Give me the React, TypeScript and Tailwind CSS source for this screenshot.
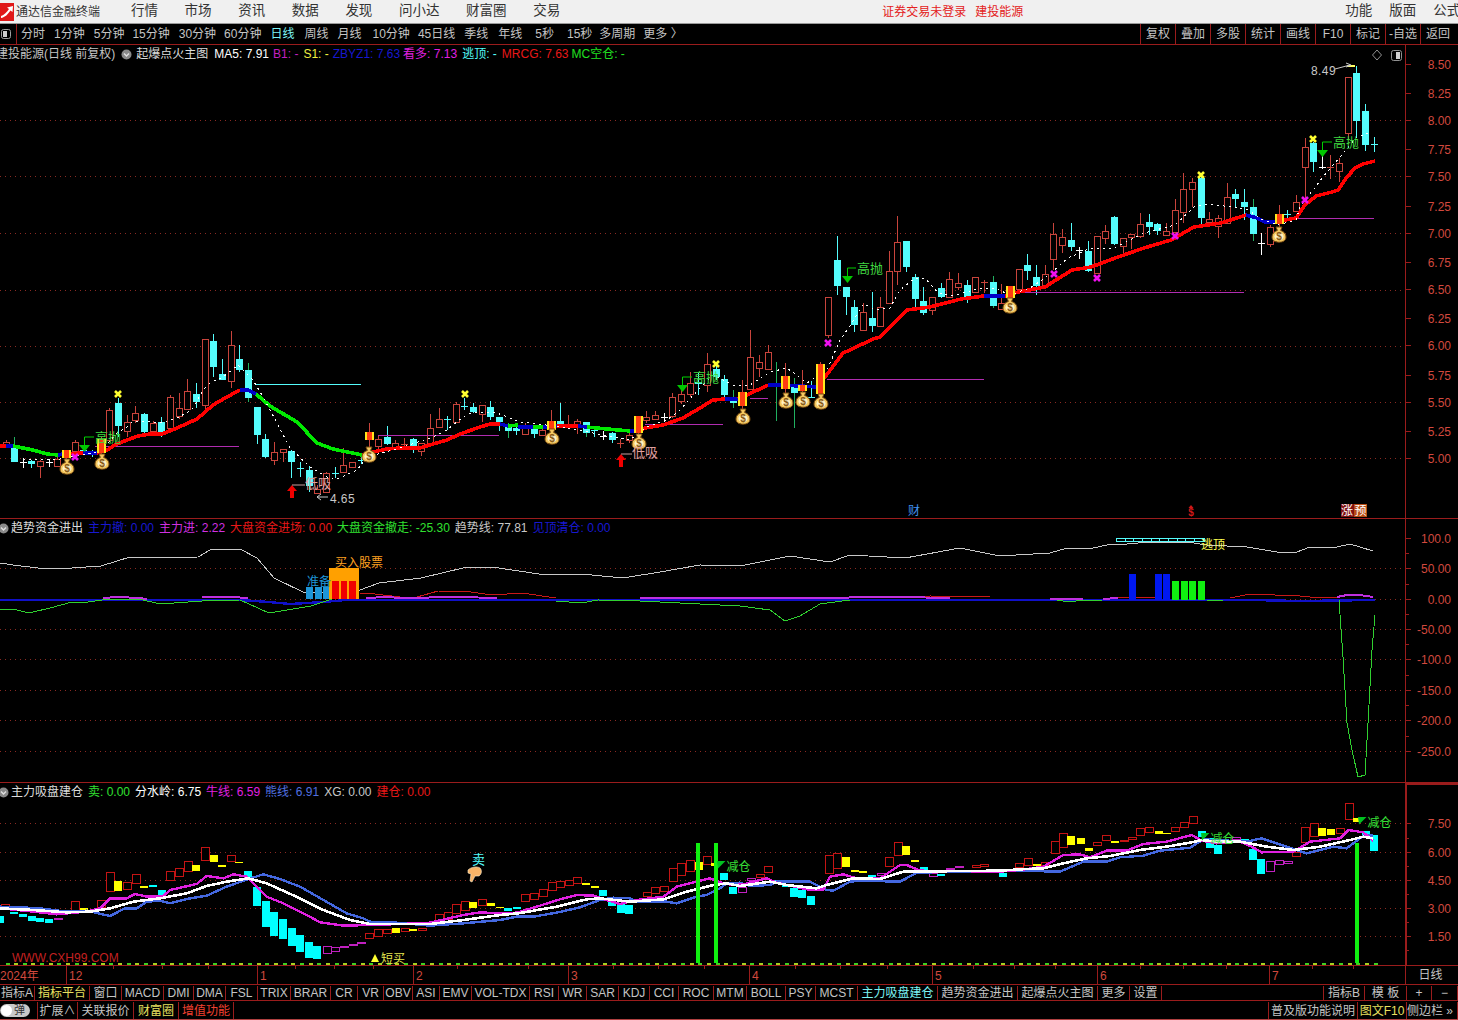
import React from 'react'

type Kind = 'r' | 'c' | 'g' | 'w' | 'd' | 'e' | 's'
type Row = [number, number, number, number, Kind]
type Pt = [number, number]

const BORDER = '#9a1c1c'
const GRID = '#8a2a22'
const AXIS_TEXT = '#d2493e'

// x of candle i, all the panels share it
const cx = (i: number) => 5.5 + 8.66 * i

// rows are read off 3x crops, so y = base + v / 3
const seg = (start: number, base: number, rows: Row[]) =>
  rows.map((r, k) => ({
    x: cx(start + k),
    top: base + r[0] / 3,
    bot: base + r[1] / 3,
    hi: base + r[2] / 3,
    lo: base + r[3] / 3,
    kind: r[4],
  }))

const candles = [
  ...seg(0, 330, [
    [335, 345, 330, 350, 'r'], [355, 395, 322, 395, 'g'], [395, 395, 385, 413, 'w'], [393, 402, 390, 413, 'c'],
    [393, 407, 390, 443, 'r'], [397, 397, 388, 410, 'w'], [387, 407, 382, 407, 'r'], [361, 384, 361, 390, 's'],
    [335, 362, 330, 362, 'r'], [360, 375, 345, 375, 'c'], [370, 370, 360, 380, 'd'], [327, 370, 320, 375, 's'],
    [240, 330, 235, 335, 'r'], [218, 288, 205, 320, 'c'], [275, 302, 255, 320, 'r'], [250, 270, 228, 280, 'r'],
    [252, 306, 250, 308, 'c'], [280, 305, 272, 308, 'r'], [275, 307, 262, 322, 'c'], [202, 295, 195, 298, 'r'],
    [235, 260, 190, 268, 'r'], [182, 235, 148, 240, 'r'], [192, 217, 160, 235, 'c'], [28, 225, 28, 238, 'r'],
    [33, 110, 12, 142, 'c'], [132, 150, 88, 150, 'c'], [46, 155, 3, 175, 'r'], [88, 120, 45, 125, 'c'],
    [120, 203, 98, 215, 'g'], [230, 315, 230, 342, 'c'], [327, 381, 312, 385, 'c'], [367, 392, 335, 405, 'r'],
    [358, 367, 358, 395, 'r'], [363, 395, 360, 443, 'c'], [415, 415, 395, 440, 'd'], [420, 467, 408, 485, 'c'],
    [478, 490, 465, 492, 'r'], [430, 488, 425, 490, 'r'], [430, 430, 412, 445, 'd'], [405, 425, 355, 425, 'r'],
    [397, 412, 395, 415, 'r'], [390, 390, 378, 402, 'd'], [306, 330, 280, 355, 's'], [328, 350, 318, 360, 'r'],
    [322, 343, 288, 345, 'c'], [340, 352, 330, 360, 'r'],
  ]),
  ...seg(46, 330, [
    [342, 342, 325, 350, 'e'], [328, 350, 325, 368, 'c'], [338, 362, 338, 378, 'r'], [295, 340, 252, 345, 'r'],
    [267, 290, 235, 295, 'r'], [267, 267, 258, 300, 'd'], [222, 275, 215, 278, 'r'], [228, 228, 205, 240, 'd'],
    [232, 247, 218, 250, 'c'], [226, 254, 226, 275, 'r'], [232, 260, 213, 270, 'c'], [262, 276, 262, 303, 'c'],
    [285, 302, 280, 323, 'g'], [294, 302, 285, 315, 'c'], [295, 314, 280, 314, 'r'], [298, 313, 290, 323, 'c'],
    [300, 314, 290, 314, 'r'], [273, 300, 240, 315, 's'], [272, 285, 220, 290, 'c'], [286, 286, 255, 295, 'e'],
    [272, 285, 268, 312, 'r'], [277, 308, 277, 320, 'g'], [300, 300, 290, 320, 'd'], [318, 318, 303, 330, 'w'],
    [310, 330, 305, 338, 'c'], [340, 340, 328, 355, 'e'], [315, 331, 305, 340, 'r'], [258, 308, 258, 320, 's'],
    [260, 270, 243, 280, 'r'], [255, 268, 243, 270, 'r'], [262, 262, 250, 275, 'w'], [202, 260, 190, 265, 'r'],
    [193, 215, 180, 222, 'r'], [160, 192, 125, 200, 'r'], [155, 163, 130, 195, 'c'], [103, 165, 70, 185, 'r'],
    [118, 140, 95, 150, 'c'], [148, 195, 135, 200, 'c'], [208, 220, 180, 233, 'g'], [187, 228, 150, 240, 's'],
    [82, 178, 0, 180, 'r'], [95, 112, 75, 140, 'r'], [67, 118, 45, 120, 'r'], [175, 175, 97, 272, 'g'],
    [138, 177, 100, 190, 's'], [167, 188, 145, 293, 'g'], [165, 183, 120, 190, 's'], [200, 200, 153, 205, 'd'],
    [102, 192, 97, 195, 's'],
  ]),
  ...seg(95, 200, [
    [292, 405, 292, 415, 'r'], [180, 258, 108, 285, 'c'], [262, 290, 262, 345, 'c'], [322, 375, 300, 395, 'c'],
    [337, 392, 310, 392, 'r'], [355, 378, 277, 395, 'c'], [320, 377, 290, 380, 'r'], [214, 311, 153, 312, 'r'],
    [127, 214, 48, 255, 'r'], [124, 201, 124, 215, 'c'], [230, 298, 222, 320, 'c'], [304, 338, 262, 345, 'c'],
    [290, 330, 290, 345, 'r'], [265, 290, 250, 295, 'c'], [238, 292, 215, 295, 'r'], [250, 263, 218, 270, 'r'],
    [256, 290, 240, 308, 'c'], [232, 278, 232, 280, 'r'], [245, 245, 240, 280, 'e'], [247, 317, 228, 325, 'g'],
    [310, 328, 252, 330, 'r'], [258, 295, 258, 300, 's'], [208, 268, 208, 270, 'r'], [195, 214, 163, 240, 'c'],
    [232, 258, 195, 285, 'c'],
  ]),
  ...seg(120, 165, [
    [328, 360, 300, 360, 'r'], [208, 284, 175, 315, 'r'], [217, 240, 192, 265, 'r'], [225, 246, 175, 258, 'c'],
    [255, 255, 245, 282, 'w'], [258, 318, 228, 320, 'c'], [213, 323, 213, 325, 'r'], [198, 218, 180, 238, 'r'],
    [155, 238, 153, 240, 'c'], [220, 245, 220, 265, 'r'], [208, 218, 208, 252, 'r'], [178, 215, 145, 218, 'r'],
    [170, 187, 148, 210, 'c'], [177, 198, 175, 210, 'c'], [198, 209, 175, 210, 'r'], [135, 200, 102, 205, 'r'],
    [72, 140, 25, 175, 'r'], [52, 73, 40, 125, 'r'], [40, 158, 30, 190, 'c'], [163, 172, 140, 185, 'r'],
    [160, 185, 150, 218, 'r'], [95, 172, 55, 173, 'r'], [87, 102, 72, 125, 'c'], [112, 126, 72, 165, 'c'],
    [127, 207, 103, 227, 'g'], [235, 235, 205, 270, 'w'], [187, 237, 180, 245, 'r'], [148, 177, 120, 190, 's'],
    [147, 147, 135, 165, 'd'], [110, 137, 90, 140, 'r'],
  ]),
  ...seg(150, 50, [
    [292, 352, 265, 445, 'r'], [278, 335, 275, 365, 'c'], [352, 352, 318, 358, 'w'], [351, 351, 315, 388, 'e'],
    [340, 365, 325, 395, 'r'], [82, 250, 82, 270, 'r'], [70, 212, 48, 260, 'c'], [183, 285, 163, 303, 'c'],
    [282, 282, 260, 305, 'd'],
  ]),
]

const mrcg: { c: string; p: Pt[] }[] = [
  { c: '#ff0000', p: [[0, 446], [6, 446]] },
  { c: '#0000c8', p: [[6, 446], [13, 446]] },
  { c: '#00e800', p: [[13, 446], [23, 448], [33, 450], [47, 454], [58, 455]] },
  { c: '#0000c8', p: [[58, 455], [63, 454]] },
  { c: '#ff0000', p: [[63, 454], [83, 453]] },
  { c: '#0000c8', p: [[83, 453], [97, 453]] },
  { c: '#ff0000', p: [[97, 453], [107, 450], [115, 445], [127, 440], [138, 436], [150, 434], [162, 434], [177, 428], [197, 419], [213, 405], [225, 398], [240, 390]] },
  { c: '#0000c8', p: [[240, 390], [248, 390], [256, 394]] },
  { c: '#00e800', p: [[256, 394], [270, 406], [297, 422], [317, 443], [333, 449], [362, 455]] },
  { c: '#ff0000', p: [[362, 455], [373, 452], [387, 449], [400, 448], [420, 448], [433, 444], [447, 440], [460, 434], [480, 427], [490, 424], [500, 424]] },
  { c: '#0000c8', p: [[500, 424], [508, 426]] },
  { c: '#00e800', p: [[508, 426], [518, 425]] },
  { c: '#0000c8', p: [[518, 427], [533, 427]] },
  { c: '#00e800', p: [[533, 427], [543, 427]] },
  { c: '#0000c8', p: [[543, 427], [557, 426]] },
  { c: '#ff0000', p: [[557, 426], [578, 426]] },
  { c: '#0000c8', p: [[578, 426], [587, 427]] },
  { c: '#00e800', p: [[587, 427], [607, 429], [630, 431]] },
  { c: '#0000c8', p: [[630, 431], [640, 431]] },
  { c: '#ff0000', p: [[640, 431], [645, 428], [663, 425], [683, 418], [700, 408], [713, 400], [725, 399]] },
  { c: '#0000c8', p: [[725, 399], [738, 399]] },
  { c: '#ff0000', p: [[738, 399], [747, 395], [768, 385]] },
  { c: '#0000c8', p: [[768, 385], [782, 385], [817, 387]] },
  { c: '#ff0000', p: [[817, 387], [825, 377], [843, 353], [850, 350], [873, 339], [880, 337], [907, 310], [930, 307], [961, 299], [984, 296]] },
  { c: '#0000c8', p: [[984, 296], [1005, 296]] },
  { c: '#ff0000', p: [[1005, 296], [1018, 292], [1045, 287], [1072, 270], [1091, 267], [1118, 257], [1144, 248], [1171, 240], [1194, 227], [1221, 223], [1246, 215]] },
  { c: '#0000c8', p: [[1246, 215], [1257, 218], [1265, 222], [1275, 222]] },
  { c: '#ff0000', p: [[1275, 222], [1285, 220], [1296, 218], [1305, 205], [1316, 196], [1332, 192], [1338, 190], [1347, 177], [1355, 168], [1363, 164], [1375, 161]] },
]

const dashed: Pt[] = [
  [23, 459], [60, 459], [76, 456], [100, 452], [117, 433], [127, 427], [133, 421], [150, 422], [163, 423], [177, 418], [192, 410], [203, 390], [210, 383],
  [223, 377], [238, 365], [253, 380], [263, 397], [277, 423], [290, 448], [310, 467], [327, 477], [337, 479], [357, 470], [367, 457],
  [400, 448], [433, 437], [447, 430], [463, 417], [473, 412], [497, 413], [520, 422], [563, 427], [613, 437], [630, 440], [647, 427], [667, 420], [680, 410],
  [698, 390], [713, 375], [733, 385], [750, 385], [770, 372], [787, 368], [807, 383], [827, 370], [840, 340], [852, 323], [863, 304], [877, 310], [890, 308],
  [900, 290], [915, 278], [926, 279], [938, 293], [953, 296], [980, 288], [995, 288], [1010, 295], [1030, 288], [1045, 278], [1068, 258], [1091, 248], [1114, 248],
  [1144, 233], [1175, 225], [1194, 207], [1209, 204], [1232, 207], [1248, 210], [1263, 220], [1278, 225], [1296, 220], [1300, 207], [1323, 177], [1340, 157], [1357, 137], [1372, 132],
]

const bagsAt: Pt[] = [[67, 468], [102, 463], [369, 456], [552, 438], [639, 443], [743, 418], [786, 402], [803, 401], [821, 403], [1010, 307], [1279, 236]]
const yellowStars: Pt[] = [[118, 394], [465, 394], [716, 364], [1313, 139], [1201, 175]]
const pinkStars: Pt[] = [[75, 457], [828, 343], [1054, 274], [1097, 278], [1175, 236], [1305, 200]]

const hLines: [number, number, number, string][] = [
  [95, 239, 446.5, '#b02cb0'], [378, 499, 435.5, '#b02cb0'], [645, 723, 424.5, '#b02cb0'], [750, 768, 398.5, '#b02cb0'],
  [827, 984, 379.5, '#b02cb0'], [1010, 1244, 292.5, '#b02cb0'], [1285, 1374, 218.5, '#b02cb0'], [256, 361, 384.5, '#54fcfc'],
]

const toPts = (p: Pt[]) => p.map((q) => q.join(',')).join(' ')
// same as above for points read off a 3x crop
const crop = (bx: number, by: number, p: Pt[]): Pt[] => p.map(([x, y]) => [bx + x / 3, by + y / 3])

function Grid({ ys }: { ys: number[] }) {
  return (
    <g shapeRendering="crispEdges">
      {ys.map((y) => (
        <line key={y} x1={0} x2={1405} y1={Math.round(y) + 0.5} y2={Math.round(y) + 0.5} stroke={GRID} strokeDasharray="1 4" />
      ))}
    </g>
  )
}

function Candle({ c }: { c: (typeof candles)[number] }) {
  const x = Math.round(c.x)
  const red = '#c8443c'
  if (c.kind === 's') {
    return (
      <g shapeRendering="crispEdges">
        <line x1={x + 0.5} x2={x + 0.5} y1={c.hi} y2={c.lo} stroke={red} />
        <rect x={x - 4} y={c.top} width={9} height={c.bot - c.top} fill="#ffe81c" />
        <rect x={x - 2} y={c.top} width={5} height={c.bot - c.top} fill="#ff3c10" />
      </g>
    )
  }
  if (c.kind === 'r') {
    return (
      <g shapeRendering="crispEdges">
        <line x1={x + 0.5} x2={x + 0.5} y1={c.hi} y2={c.lo} stroke={red} />
        <rect x={x - 2.5} y={Math.round(c.top) + 0.5} width={6} height={Math.max(2, c.bot - c.top)} fill="#000" stroke={red} />
      </g>
    )
  }
  if (c.kind === 'c' || c.kind === 'g') {
    return (
      <g shapeRendering="crispEdges">
        <line x1={x + 0.5} x2={x + 0.5} y1={c.hi} y2={c.lo} stroke={c.kind === 'g' ? '#20b060' : '#54fcfc'} />
        <rect x={x - 3} y={c.top} width={7} height={c.bot - c.top} fill="#54fcfc" />
      </g>
    )
  }
  const col = c.kind === 'w' ? '#ffffff' : c.kind === 'e' ? red : '#54fcfc'
  return (
    <g shapeRendering="crispEdges" stroke={col}>
      <line x1={x + 0.5} x2={x + 0.5} y1={c.hi} y2={c.lo} />
      <line x1={x - 3} x2={x + 4} y1={c.top + 0.5} y2={c.top + 0.5} />
    </g>
  )
}

function Bag({ x, y }: { x: number; y: number }) {
  return (
    <g transform={`translate(${x} ${y})`}>
      <path d="M-3 -9 h6 l-1.4 3.4 c3.6 1.2 5.4 3.6 5.4 6.6 c0 3.6 -3 5.2 -7 5.2 s-7 -1.6 -7 -5.2 c0 -3 1.8 -5.4 5.4 -6.6z" fill="#f4c860" stroke="#7a4c10" />
      <ellipse cx={0} cy={0.5} rx={4.6} ry={3.8} fill="#fff2c4" />
      <text x={0} y={3.8} fontSize={10} fontWeight={700} textAnchor="middle" fill="#8a5a14">$</text>
    </g>
  )
}

function Star({ x, y, c }: { x: number; y: number; c: string }) {
  return <path d={`M${x - 3} ${y - 3} L${x + 3} ${y + 3} M${x + 3} ${y - 3} L${x - 3} ${y + 3}`} stroke={c} strokeWidth={2.6} />
}

function SellTag({ x, y, tx }: { x: number; y: number; tx: number }) {
  return (
    <g>
      <path d={`M${tx - 1} ${y - 8} H${x + 0.5} V${y}`} fill="none" stroke="#00d000" />
      <path d={`M${x - 5} ${y} H${x + 6} L${x + 0.5} ${y + 7}z`} fill="#00c800" />
      <text x={tx} y={y - 3.5} fontSize={13} fill="#40d840">高抛</text>
    </g>
  )
}

function BuyTag({ x, y, tx }: { x: number; y: number; tx: number }) {
  return (
    <g>
      <path d={`M${x - 5} ${y} L${x} ${y - 6} L${x + 5} ${y} H${x + 2} V${y + 7} H${x - 2} V${y}z`} fill="#f00000" />
      <path d={`M${x} ${y - 6} H${tx}`} stroke="#c8a0a0" />
      <text x={tx} y={y - 3} fontSize={13} fill="#e0a0a0">低吸</text>
    </g>
  )
}

function MainChart() {
  return (
    <svg width={1405} height={473} viewBox="0 45 1405 473" className="block shrink-0">
      <Grid ys={[120, 176, 233, 289.5, 346, 402, 458]} />
      {candles.map((c, i) => c.kind !== 's' && <Candle key={i} c={c} />)}
      {hLines.map(([a, b, y, c]) => (
        <line key={a} x1={a} x2={b} y1={y} y2={y} stroke={c} shapeRendering="crispEdges" />
      ))}
      {mrcg.map((s, i) => (
        <polyline key={i} points={toPts(s.p)} fill="none" stroke={s.c} strokeWidth={3.6} strokeLinejoin="round" shapeRendering="crispEdges" />
      ))}
      <polyline points={toPts(dashed)} fill="none" stroke="#ffffff" strokeWidth={1} strokeDasharray="2 4" shapeRendering="crispEdges" />
      {candles.map((c, i) => c.kind === 's' && <Candle key={i} c={c} />)}
      {bagsAt.map(([x, y]) => <Bag key={x} x={x} y={y} />)}
      {yellowStars.map(([x, y]) => <Star key={x} x={x} y={y} c="#ffff30" />)}
      {pinkStars.map(([x, y]) => <Star key={x} x={x} y={y} c="#f010f0" />)}
      <SellTag x={84} y={445} tx={95} />
      <SellTag x={847} y={276} tx={857} />
      <SellTag x={682} y={385} tx={693} />
      <SellTag x={1322} y={150} tx={1333} />
      <BuyTag x={292} y={491} tx={305} />
      <BuyTag x={621} y={460} tx={632} />
      <rect x={1347} y={65} width={8} height={2} fill="#ffff60" />
      <text x={1311} y={75} fontSize={12} fill="#c8c8c8" letterSpacing={0.4}>8.49</text>
      <path d="M1335 69 L1350 65 M1346 63 L1351 65 L1346 67" stroke="#c8c8c8" fill="none" />
      <text x={330} y={503} fontSize={12} fill="#c8c8c8" letterSpacing={0.4}>4.65</text>
      <path d="M328 497 H317 M321 494 L317 497 L321 500" stroke="#c8c8c8" fill="none" />
      <path d="M1377 50 L1381.5 55 L1377 60 L1372.5 55z" fill="none" stroke="#909090" />
      <rect x={1391.5} y={50.5} width={10} height={10} rx={2} fill="none" stroke="#909090" />
      <rect x={1396} y={52} width={4} height={7} fill="#d0d0d0" />
      <text x={908} y={515} fontSize={12} fill="#4090f0">财</text>
      <path d="M1191 505 l2.5 3 h-5z" fill="#d01818" />
      <text x={1191} y={516} fontSize={10} fontWeight={700} textAnchor="middle" fill="#d01818">$</text>
      <rect x={1341} y={504} width={13} height={13} fill="#801010" />
      <rect x={1354} y={504} width={13} height={13} fill="#b84c14" />
      <text x={1341} y={515} fontSize={12} fill="#ffffff">涨</text>
      <text x={1354.5} y={515} fontSize={12} fill="#ffffff">预</text>
    </svg>
  )
}

const trend: Pt[] = [
  [0, 563], [13, 565], [38, 568], [72, 568], [101, 566], [130, 557], [156, 558], [198, 557], [210, 550], [240, 549], [257, 558], [274, 578], [305, 593],
  [360, 590], [379, 583], [421, 578], [463, 568], [492, 567], [539, 574], [581, 574], [623, 578], [660, 572], [700, 565], [740, 566], [790, 556], [830, 562],
  [850, 555], [905, 558], [960, 548], [1000, 556], [1050, 553], [1067, 548], [1093, 548], [1107, 545], [1127, 544], [1150, 542], [1187, 542], [1207, 545],
  [1247, 547], [1277, 552], [1297, 552], [1310, 547], [1337, 547], [1350, 544], [1373, 551],
]
const greenParts: Pt[][] = [
  [[0, 610], [13, 609], [29, 613], [50, 608], [72, 602], [88, 602], [109, 599], [139, 599], [160, 604], [202, 601], [240, 600], [269, 613], [311, 606], [332, 599]],
  [[556, 601], [581, 603], [598, 600], [640, 601], [680, 603], [740, 606], [770, 610], [785, 621], [800, 616], [820, 604], [850, 600]],
  [[1050, 599], [1070, 602], [1083, 600], [1102, 600]],
  [[1207, 601], [1223, 600]],
  [[1339, 600], [1343, 657], [1347, 723], [1352, 750], [1358, 777], [1365, 775], [1368, 723], [1372, 650], [1375, 615]],
]
const redParts: Pt[][] = [
  [[114, 597], [139, 597]],
  [[360, 593], [375, 594], [400, 597], [417, 597], [438, 591], [471, 592], [492, 595], [522, 593], [556, 598]],
  [[880, 598], [930, 596], [990, 597]],
  [[1118, 597], [1155, 597]],
  [[1230, 598], [1240, 596], [1250, 594], [1300, 596], [1310, 597], [1337, 597]],
]
const purpleParts: Pt[][] = [
  [[103, 598], [118, 597], [139, 598], [147, 599]],
  [[202, 597], [231, 597], [248, 598]],
  [[366, 598], [387, 597], [400, 598], [459, 597], [497, 598]],
  [[640, 598], [690, 598], [800, 598], [900, 597], [950, 598]],
  [[1050, 599], [1083, 599]],
  [[1103, 599], [1118, 598]],
  [[1337, 597], [1347, 595], [1360, 595], [1373, 597]],
]
const blueBase: Pt[] = [[0, 600], [240, 600], [269, 602], [290, 604], [324, 602], [345, 600], [1250, 600], [1300, 601], [1375, 600]]

function FundChart() {
  const ladder = Array.from({ length: 11 }, (_, k) => 1116.5 + k * 8.66)
  return (
    <svg width={1405} height={263} viewBox="0 519 1405 263" className="block shrink-0">
      <Grid ys={[568, 599, 629, 659, 690, 720, 751]} />
      <polyline points={toPts(trend)} fill="none" stroke="#c8c8c8" shapeRendering="crispEdges" />
      <polyline points={toPts(blueBase)} fill="none" stroke="#1010c8" strokeWidth={2.4} shapeRendering="crispEdges" />
      {greenParts.map((p, i) => <polyline key={i} points={toPts(p)} fill="none" stroke="#30d030" shapeRendering="crispEdges" />)}
      {redParts.map((p, i) => <polyline key={i} points={toPts(p)} fill="none" stroke="#c81818" shapeRendering="crispEdges" />)}
      {purpleParts.map((p, i) => <polyline key={i} points={toPts(p)} fill="none" stroke="#c030e0" strokeWidth={2} shapeRendering="crispEdges" />)}
      <g shapeRendering="crispEdges">
        <rect x={306} y={587} width={7} height={12} fill="#1e96d8" />
        <rect x={315} y={587} width={7} height={12} fill="#1e96d8" />
        <rect x={323} y={587} width={6} height={12} fill="#1e96d8" />
        <rect x={329} y={568} width={30} height={31} fill="#ffa000" />
        <rect x={332} y={581} width={7} height={18} fill="#f00000" />
        <rect x={341} y={581} width={6} height={18} fill="#f00000" />
        <rect x={349} y={581} width={7} height={18} fill="#f00000" />
        {[1129, 1155, 1163].map((x) => <rect key={x} x={x} y={574} width={7} height={26} fill="#0018f0" />)}
        {[1172, 1181, 1189, 1198].map((x) => <rect key={x} x={x} y={581} width={7} height={19} fill="#10f010" />)}
        <rect x={1116.5} y={538.5} width={88} height={3} fill="none" stroke="#54fcfc" />
        {ladder.map((x) => <line key={x} x1={x} x2={x} y1={538} y2={542} stroke="#54fcfc" />)}
      </g>
      <text x={307} y={586} fontSize={12} fill="#1e96d8">准备</text>
      <text x={335} y={567} fontSize={12} fill="#ffa020">买入股票</text>
      <text x={1201} y={549} fontSize={12} fill="#ffff50">逃顶</text>
    </svg>
  )
}

type Box = [number, number, number, 'r' | 'y' | 'c' | 'm']
const boxes = (bx: number, by: number, rows: Box[]) =>
  rows.map(([x, a, b, k]) => ({ x: bx + x / 3, top: by + a / 3, bot: by + b / 3, k }))

const volBoxes = [
  ...boxes(0, 780, [
    [16, 373, 385, 'r'], [0, 408, 430, 'c'], [43, 396, 401, 'c'], [70, 402, 410, 'c'], [95, 408, 422, 'c'], [121, 414, 425, 'c'], [148, 418, 428, 'c'], [174, 415, 419, 'm'],
    [226, 363, 390, 'r'], [252, 384, 389, 'y'], [278, 396, 400, 'y'], [304, 361, 382, 'r'], [330, 277, 335, 'r'], [355, 303, 333, 'y'], [381, 305, 325, 'r'], [407, 283, 310, 'r'],
    [433, 318, 323, 'y'], [460, 315, 320, 'c'], [485, 330, 345, 'c'], [511, 272, 298, 'r'], [537, 265, 290, 'r'], [563, 243, 272, 'r'], [589, 256, 272, 'y'], [616, 202, 242, 'r'],
    [641, 225, 245, 'y'], [667, 255, 260, 'y'], [694, 225, 242, 'r'], [718, 245, 250, 'y'], [745, 273, 292, 'c'], [771, 320, 377, 'c'], [797, 363, 441, 'c'], [823, 396, 468, 'c'],
    [850, 417, 476, 'c'], [875, 444, 498, 'c'], [901, 465, 515, 'c'], [928, 486, 533, 'c'], [952, 498, 536, 'c'], [980, 498, 520, 'm'], [1006, 502, 514, 'm'], [1032, 498, 502, 'm'],
    [1058, 491, 495, 'm'], [1084, 487, 491, 'm'], [1108, 460, 476, 'r'], [1135, 446, 466, 'r'], [1161, 447, 460, 'r'], [1187, 444, 458, 'y'], [1214, 445, 454, 'r'], [1240, 447, 454, 'y'],
    [1265, 445, 451, 'r'], [1318, 403, 423, 'r'], [1343, 397, 417, 'r'], [1369, 373, 400, 'r'], [1396, 363, 390, 'r'], [1420, 366, 384, 'y'], [1447, 357, 376, 'r'], [1473, 369, 377, 'y'],
  ]),
  ...boxes(500, 800, [
    [0, 322, 325, 'y'], [25, 324, 333, 'c'], [52, 321, 326, 'c'], [76, 283, 305, 'r'], [103, 280, 298, 'r'], [128, 268, 288, 'r'], [155, 247, 272, 'r'], [181, 243, 262, 'r'], [206, 241, 257, 'r'],
    [232, 232, 250, 'r'], [259, 249, 254, 'y'], [284, 258, 263, 'y'], [310, 270, 288, 'c'], [337, 295, 317, 'c'], [362, 312, 338, 'c'], [388, 315, 341, 'c'], [440, 277, 290, 'r'], [466, 262, 281, 'r'],
    [493, 259, 275, 'r'], [518, 205, 245, 'r'], [544, 190, 226, 'r'], [571, 181, 214, 'r'], [596, 186, 209, 'y'], [622, 169, 194, 'r'], [645, 189, 197, 'y'], [673, 220, 240, 'c'], [700, 262, 281, 'c'],
    [727, 262, 277, 'm'], [752, 235, 241, 'm'], [779, 223, 232, 'r'], [805, 199, 217, 'r'], [830, 240, 246, 'c'], [857, 255, 261, 'c'], [883, 265, 290, 'c'], [907, 270, 293, 'c'], [934, 289, 314, 'c'],
    [986, 166, 221, 'r'], [1012, 159, 205, 'r'], [1039, 172, 200, 'y'], [1065, 211, 215, 'y'], [1090, 214, 218, 'y'], [1116, 225, 231, 'c'], [1142, 220, 226, 'm'], [1168, 171, 197, 'r'], [1195, 127, 166, 'r'],
    [1219, 139, 164, 'y'], [1246, 181, 187, 'y'], [1272, 202, 212, 'c'], [1298, 218, 226, 'm'], [1324, 222, 227, 'c'], [1350, 205, 208, 'm'], [1376, 199, 203, 'm'], [1428, 196, 202, 'r'], [1453, 193, 200, 'r'], [1480, 213, 220, 'c'],
  ]),
  ...boxes(1000, 800, [
    [8, 218, 232, 'c'], [58, 188, 200, 'r'], [85, 175, 197, 'r'], [110, 192, 198, 'y'], [136, 185, 195, 'r'], [164, 124, 160, 'r'], [188, 100, 143, 'r'], [213, 107, 134, 'y'], [242, 114, 132, 'y'], [266, 144, 152, 'y'],
    [292, 127, 136, 'r'], [319, 106, 121, 'r'], [344, 123, 128, 'y'], [371, 121, 125, 'r'], [397, 112, 118, 'r'], [421, 85, 106, 'r'], [448, 82, 97, 'r'], [476, 93, 101, 'y'], [500, 99, 101, 'y'], [526, 80, 92, 'r'],
    [552, 67, 83, 'r'], [578, 49, 70, 'r'], [605, 94, 112, 'c'], [631, 115, 143, 'c'], [655, 135, 161, 'c'], [708, 110, 117, 'm'], [735, 118, 127, 'c'], [760, 148, 179, 'c'], [784, 178, 223, 'c'], [811, 184, 214, 'm'],
    [838, 181, 193, 'm'], [864, 182, 187, 'm'], [889, 155, 166, 'r'], [916, 80, 124, 'r'], [941, 70, 110, 'r'], [967, 85, 108, 'y'], [994, 88, 104, 'y'], [1019, 83, 97, 'r'], [1046, 8, 56, 'r'], [1072, 55, 67, 'y'], [1097, 94, 110, 'c'], [1123, 105, 152, 'c'],
  ]),
]

const bluePts = [
  ...crop(0, 780, [[0, 380], [60, 382], [120, 385], [200, 395], [260, 392], [330, 408], [375, 385], [410, 385], [440, 365], [480, 362], [510, 370], [560, 357], [620, 347], [680, 320], [745, 297], [790, 283], [840, 297], [900, 320], [970, 360], [1040, 400], [1090, 415], [1110, 425], [1190, 428], [1290, 437], [1390, 430], [1500, 420]]),
  ...crop(500, 800, [[50, 350], [100, 350], [170, 338], [240, 322], [300, 300], [340, 293], [390, 295], [410, 305], [500, 305], [530, 310], [590, 290], [620, 285], [660, 265], [680, 250], [720, 248], [750, 258], [810, 255], [830, 245], [930, 245], [980, 270], [1000, 272], [1050, 245], [1080, 242], [1160, 244], [1200, 245], [1250, 218], [1500, 212]]),
  ...crop(1000, 800, [[100, 212], [150, 215], [180, 215], [250, 185], [320, 185], [360, 172], [430, 167], [480, 152], [570, 143], [610, 118], [740, 125], [785, 115], [890, 150], [920, 160], [1000, 140], [1040, 145], [1090, 107], [1120, 107]]),
]
const whitePts = [
  ...crop(0, 780, [[0, 385], [100, 390], [200, 397], [270, 395], [330, 385], [400, 365], [480, 355], [560, 340], [620, 318], [680, 305], [745, 295], [800, 310], [900, 355], [970, 390], [1050, 420], [1110, 432], [1200, 432], [1290, 432], [1390, 420], [1500, 405]]),
  ...crop(500, 800, [[55, 340], [170, 320], [260, 298], [300, 295], [390, 305], [490, 298], [560, 275], [640, 255], [680, 250], [720, 258], [810, 245], [860, 255], [950, 265], [980, 255], [1060, 235], [1140, 237], [1210, 215], [1500, 212]]),
  ...crop(1000, 800, [[60, 208], [130, 205], [190, 190], [260, 175], [330, 168], [420, 150], [500, 140], [570, 128], [605, 120], [650, 125], [720, 125], [800, 140], [880, 150], [960, 140], [1050, 120], [1090, 110], [1120, 115]]),
]
const magentaPts = [
  ...crop(0, 780, [[0, 385], [100, 395], [170, 403], [260, 395], [300, 385], [330, 355], [380, 355], [405, 342], [440, 350], [490, 348], [510, 330], [590, 312], [620, 288], [670, 295], [700, 283], [740, 290], [770, 320], [800, 350], [850, 370], [920, 405], [960, 427], [1030, 437], [1110, 435], [1200, 432], [1290, 428], [1390, 405], [1440, 397], [1500, 400]]),
  ...crop(500, 800, [[50, 338], [110, 320], [180, 298], [230, 285], [280, 287], [320, 300], [360, 312], [410, 300], [490, 290], [530, 260], [590, 245], [630, 235], [670, 250], [700, 255], [730, 253], [800, 235], [830, 248], [930, 270], [970, 268], [990, 230], [1030, 223], [1070, 235], [1140, 235], [1200, 195], [1220, 195], [1260, 212], [1500, 215]]),
  ...crop(1000, 800, [[60, 210], [130, 200], [190, 165], [240, 163], [270, 172], [320, 152], [380, 152], [430, 132], [500, 125], [575, 105], [605, 122], [650, 130], [720, 125], [755, 140], [785, 157], [880, 155], [930, 125], [1020, 115], [1045, 90], [1090, 97], [1120, 122]]),
]

function ReduceTag({ x, y }: { x: number; y: number }) {
  return (
    <g>
      <path d={`M${x} ${y} h8.5 L${x + 1} ${y + 7.5}z`} fill="#00c020" />
      <text x={x + 9.5} y={y + 10} fontSize={12} fill="#38e038">减仓</text>
    </g>
  )
}

function AccumChart() {
  const dots = Array.from({ length: 159 }, (_, k) => cx(k))
  return (
    <svg width={1405} height={182} viewBox="0 783 1405 182" className="block shrink-0">
      <Grid ys={[823, 852, 880, 908, 936]} />
      <g shapeRendering="crispEdges">
        {volBoxes.map((b, i) =>
          b.k === 'r' || b.k === 'm' ? (
            <rect key={i} x={Math.round(b.x) - 3.5} y={Math.round(b.top) + 0.5} width={8} height={Math.max(1, Math.round(b.bot - b.top))} fill="#000" stroke={b.k === 'r' ? '#c41414' : '#c020c0'} />
          ) : (
            <rect key={i} x={Math.round(b.x) - 4} y={b.top} width={8} height={b.bot - b.top} fill={b.k === 'c' ? '#00ffff' : '#ffff00'} />
          ),
        )}
      </g>
      <polyline points={toPts(bluePts)} fill="none" stroke="#4468e0" strokeWidth={2.4} shapeRendering="crispEdges" />
      <polyline points={toPts(magentaPts)} fill="none" stroke="#e020e0" strokeWidth={2.4} shapeRendering="crispEdges" />
      <polyline points={toPts(whitePts)} fill="none" stroke="#ffffff" strokeWidth={2.6} shapeRendering="crispEdges" />
      <g shapeRendering="crispEdges">
        <rect x={696} y={843} width={4} height={120} fill="#10f010" />
        <rect x={714} y={843} width={4} height={120} fill="#10f010" />
        <rect x={1355} y={843} width={4} height={120} fill="#10f010" />
        {dots.map((x, k) => (
          <rect key={k} x={Math.round(x)} y={963} width={4} height={1.5} fill={k % 2 ? '#a8d020' : '#40d020'} />
        ))}
      </g>
      <ReduceTag x={717} y={861} />
      <ReduceTag x={1201} y={833} />
      <ReduceTag x={1358} y={817} />
      <text x={472} y={864} fontSize={13} fill="#54fcfc">卖</text>
      {/* pointing hand */}
      <path d="M468 870 c3 -3 9 -4 12 -2 c2 2 2 6 -1 8 l-4 0 l-3 6 l-2 -1 l1 -7 l-3 -1z" fill="#f8b468" stroke="#fff0d0" strokeWidth={0.6} />
      <text x={12} y={962} fontSize={12} fill="#c42020">WWW.CXH99.COM</text>
      <path d="M375 954 l4 8 h-8z" fill="#ffff30" />
      <text x={381} y={963} fontSize={12} fill="#e8e850">短买</text>
    </svg>
  )
}

function Axis({ view, labels, minor = [] }: { view: string; labels: [string, number][]; minor?: number[] }) {
  const [, , w, h] = view.split(' ').map(Number)
  return (
    <svg width={w} height={h} viewBox={view} className="block shrink-0">
      <g shapeRendering="crispEdges">
        {labels.map(([t, y]) => (
          <line key={t} x1={1406} x2={1411} y1={y + 0.5} y2={y + 0.5} stroke={BORDER} />
        ))}
        {minor.map((y) => (
          <line key={y} x1={1406} x2={1409} y1={y + 0.5} y2={y + 0.5} stroke={BORDER} />
        ))}
      </g>
      {labels.map(([t, y]) => (
        <text key={t} x={1451} y={y + 4.5} fontSize={12} textAnchor="end" fill={AXIS_TEXT}>{t}</text>
      ))}
    </svg>
  )
}

function LegendIcon({ className = '' }: { className?: string }) {
  return (
    <svg width={11} height={11} viewBox="0 0 11 11" className={`shrink-0 ${className}`}>
      <circle cx={5.5} cy={5.5} r={5} fill="#8a8a8a" />
      <path d="M3 4.5 L5.5 7 L8 4.5" fill="none" stroke="#e0e0e0" strokeWidth={1.4} />
    </svg>
  )
}

const periods = [
  ['分时', 'ml-[4px]'], ['1分钟', 'ml-[9px]'], ['5分钟', 'ml-[9px]'], ['15分钟', 'ml-[8px]'], ['30分钟', 'ml-[9px]'], ['60分钟', 'ml-[8px]'],
  ['日线', 'ml-[9px] text-[#7df4f4]'], ['周线', 'ml-[10px]'], ['月线', 'ml-[9px]'], ['10分钟', 'ml-[11px]'], ['45日线', 'ml-[8px]'], ['季线', 'ml-[9px]'],
  ['年线', 'ml-[10px]'], ['5秒', 'ml-[13px]'], ['15秒', 'ml-[13px]'], ['多周期', 'ml-[7px]'], ['更多 〉', 'ml-[8px]'],
]
const rightTools = ['复权', '叠加', '多股', '统计', '画线', 'F10', '标记', '-自选', '返回']

const tabsA = [
  ['指标A', 'w-[35px]'], ['指标平台', 'w-[55px] text-[#e8e060]'], ['窗口', 'w-[32px]'], ['MACD', 'w-[42px]'], ['DMI', 'w-[30px]'], ['DMA', 'w-[32px]'],
  ['FSL', 'w-[32px]'], ['TRIX', 'w-[33px]'], ['BRAR', 'w-[40px]'], ['CR', 'w-[27px]'], ['VR', 'w-[26px]'], ['OBV', 'w-[29px]'], ['ASI', 'w-[27px]'],
  ['EMV', 'w-[32px]'], ['VOL-TDX', 'w-[58px]'], ['RSI', 'w-[29px]'], ['WR', 'w-[28px]'], ['SAR', 'w-[32px]'], ['KDJ', 'w-[31px]'], ['CCI', 'w-[29px]'],
  ['ROC', 'w-[35px]'], ['MTM', 'w-[33px]'], ['BOLL', 'w-[39px]'], ['PSY', 'w-[30px]'], ['MCST', 'w-[42px]'], ['主力吸盘建仓', 'w-[80px] text-[#7df4f4]'],
  ['趋势资金进出', 'w-[80px]'], ['起爆点火主图', 'w-[80px]'], ['更多', 'w-[32px]'], ['设置', 'w-[32px]'],
]

function Legend({ items, children, className = '' }: { items: [string, string][]; children?: React.ReactNode; className?: string }) {
  return (
    <div className={`absolute left-0 top-0 flex items-center gap-[5px] whitespace-nowrap pt-[1px] text-[12px] leading-[17px] ${className}`}>
      {children}
      {items.map(([t, c]) => (
        <span key={t} className={c}>{t}</span>
      ))}
    </div>
  )
}

export default function App() {
  return (
    <div className="flex h-[1020px] w-[1458px] flex-col overflow-hidden bg-black text-[12px] text-[#c4c4c4] [font-family:'Liberation_Sans','Noto_Sans_CJK_SC',sans-serif]">
      {/* title bar */}
      <div className="flex h-[24px] shrink-0 items-center overflow-hidden border-b border-[#9a9a9a] bg-[#f0f0f0] whitespace-nowrap text-[#333]">
        <svg width={15} height={18} viewBox="0 0 15 18" className="shrink-0">
          <rect width={14} height={18} fill="#e01818" />
          <path d="M1 13 C4 12 7 9 9 6 L7 4.5 L13 3 L12.5 9 L10.5 7.5 C8 11 5 14.5 1 15z" fill="#fff" />
        </svg>
        <span className="ml-[1px] w-[115px] shrink-0 text-[12px]">通达信金融终端</span>
        <nav className="flex shrink-0 gap-[26.6px] text-[13.5px]">
          {['行情', '市场', '资讯', '数据', '发现', '问小达', '财富圈', '交易'].map((t) => (
            <span key={t}>{t}</span>
          ))}
        </nav>
        <div className="ml-[322px] flex shrink-0 gap-[9px] text-[12px] text-[#e42020]">
          <span>证券交易未登录</span>
          <span>建投能源</span>
        </div>
        <div className="ml-[322px] flex shrink-0 gap-[17px] text-[13.5px]">
          <span>功能</span>
          <span>版面</span>
          <span>公式</span>
        </div>
      </div>

      {/* period toolbar */}
      <div className="flex h-[21px] shrink-0 items-stretch border-b border-[#9a1c1c]">
        <div className="flex w-[17px] shrink-0 items-center border-r border-[#9a1c1c] pl-[1px]">
          <svg width={10} height={10} viewBox="0 0 10 10">
            <rect x={0.5} y={0.5} width={9} height={9} rx={2} fill="none" stroke="#a0a0a0" />
            <rect x={2} y={2} width={4} height={6} fill="#d0d0d0" />
          </svg>
        </div>
        <div className="flex w-[1123px] shrink-0 items-center whitespace-nowrap">
          {periods.map(([t, c]) => (
            <span key={t} className={c}>{t}</span>
          ))}
        </div>
        {rightTools.map((t) => (
          <span key={t} className="flex w-[35px] shrink-0 items-center justify-center border-l border-[#9a1c1c]">{t}</span>
        ))}
      </div>

      {/* price panel */}
      <section className="relative flex h-[474px] shrink-0 border-b border-[#9a1c1c]">
        <MainChart />
        <div className="border-l border-[#9a1c1c]">
          <Axis
            view="1406 45 52 473"
            labels={[['8.50', 64], ['8.25', 93], ['8.00', 120], ['7.75', 149], ['7.50', 176], ['7.25', 206], ['7.00', 233], ['6.75', 262], ['6.50', 289], ['6.25', 318], ['6.00', 345], ['5.75', 375], ['5.50', 402], ['5.25', 431], ['5.00', 458]]}
          />
        </div>
        <Legend
          className="-ml-[4px]"
          items={[['MA5: 7.91', 'ml-[1px] text-white'], ['B1: -', '-ml-[1px] text-[#c020c0]'], ['S1: -', 'text-[#f0f040]'], ['ZBYZ1: 7.63', '-ml-[1px] text-[#1818d0]'], ['看多: 7.13', '-ml-[2px] text-[#e020e0]'], ['逃顶: -', 'text-[#54fcfc]'], ['MRCG: 7.63', 'text-[#e81818]'], ['MC空仓: -', '-ml-[2px] text-[#20e020]']]}
        >
          <span>建投能源(日线 前复权)</span>
          <LegendIcon className="ml-[1px] -mr-[1px]" />
          <span className="text-[#dcdcdc]">起爆点火主图</span>
        </Legend>
      </section>

      {/* fund flow panel */}
      <section className="relative flex h-[264px] shrink-0 border-b border-[#9a1c1c]">
        <FundChart />
        <div className="border-l border-[#9a1c1c]">
          <Axis
            view="1406 519 52 263"
            labels={[['100.0', 538], ['50.00', 568], ['0.00', 599], ['-50.00', 629], ['-100.0', 659], ['-150.0', 690], ['-200.0', 720], ['-250.0', 751]]}
            minor={[553, 584, 614, 644, 675, 705, 736]}
          />
        </div>
        <Legend
          items={[['主力撤: 0.00', 'text-[#1818d0]'], ['主力进: 2.22', 'text-[#d030e0]'], ['大盘资金进场: 0.00', 'text-[#e81818]'], ['大盘资金撤走: -25.30', 'text-[#30e030]'], ['趋势线: 77.81', 'text-[#c8c8c8]'], ['见顶清仓: 0.00', 'text-[#1818d0]']]}
        >
          <LegendIcon className="-ml-[2px] -mr-[4px]" />
          <span className="ml-[1px] text-[#dcdcdc]">趋势资金进出</span>
        </Legend>
      </section>

      {/* accumulation panel */}
      <section className="relative flex h-[183px] shrink-0 border-b border-[#9a1c1c]">
        <AccumChart />
        <div className="border-l-2 border-t-2 border-[#9a1c1c]">
          <Axis
            view="1407 785 51 180"
            labels={[['7.50', 823], ['6.00', 852], ['4.50', 880], ['3.00', 908], ['1.50', 936]]}
            minor={[838, 866, 894, 922, 950]}
          />
        </div>
        <Legend
          items={[['卖: 0.00', 'text-[#30e030]'], ['分水岭: 6.75', 'text-white'], ['牛线: 6.59', 'text-[#e020e0]'], ['熊线: 6.91', 'text-[#5070e0]'], ['XG: 0.00', 'text-[#c8c8c8]'], ['建仓: 0.00', 'text-[#e81818]']]}
        >
          <LegendIcon className="-ml-[2px] -mr-[4px]" />
          <span className="ml-[1px] text-[#dcdcdc]">主力吸盘建仓</span>
        </Legend>
      </section>

      {/* time axis */}
      <div className="flex h-[19px] shrink-0 border-b border-[#9a1c1c]">
        <svg width={1405} height={18} viewBox="0 966 1405 18" className="block shrink-0">
          <g shapeRendering="crispEdges">
            {[113, 162, 208, 295, 334, 373, 457, 528, 613, 658, 704, 795, 840, 887, 973, 1014, 1055, 1140, 1183, 1226, 1312, 1353].map((x) => (
              <line key={x} x1={x + 0.5} x2={x + 0.5} y1={966} y2={969} stroke={BORDER} />
            ))}
          </g>
          {([['12', 66], ['1', 257], ['2', 413], ['3', 568], ['4', 749], ['5', 932], ['6', 1097], ['7', 1269]] as [string, number][]).map(([t, x]) => (
            <g key={t}>
              <line x1={x + 0.5} x2={x + 0.5} y1={966} y2={984} stroke={BORDER} shapeRendering="crispEdges" />
              <text x={x + 3} y={980} fontSize={12} fill={AXIS_TEXT}>{t}</text>
            </g>
          ))}
          <text x={0} y={980} fontSize={12} fill={AXIS_TEXT}>2024年</text>
        </svg>
        <div className="flex w-[53px] items-center justify-center border-l border-[#9a1c1c] pr-[3px]">日线</div>
      </div>

      {/* tab rows */}
      <div className="flex h-[16px] shrink-0 items-stretch border-b border-[#9a1c1c] pt-[1px] leading-[14px] whitespace-nowrap">
        {tabsA.map(([t, c]) => (
          <span key={t} className={`flex items-center justify-center border-r border-[#9a1c1c] ${c}`}>{t}</span>
        ))}
        <span className="w-[161px]" />
        <span className="flex w-[42px] items-center justify-center border-x border-[#9a1c1c]">指标B</span>
        <span className="flex w-[42px] items-center justify-center border-r border-[#9a1c1c]">模 板</span>
        <span className="flex w-[25px] items-center justify-center border-r border-[#9a1c1c]">+</span>
        <span className="flex w-[26px] items-center justify-center border-r border-[#9a1c1c]">−</span>
      </div>
      <div className="flex h-[19px] shrink-0 items-stretch border-b border-[#b04040] pt-[1px] whitespace-nowrap">
        <div className="flex w-[38px] shrink-0 items-center border-r border-[#9a1c1c]">
          <span className="relative flex h-[13px] w-[30px] items-center justify-end rounded-full bg-[#c8c8c8] pr-[5px] text-[11px] text-[#333]">
            <span className="absolute left-[1px] top-[1px] h-[11px] w-[11px] rounded-full bg-white" />
            弹
          </span>
        </div>
        <span className="flex w-[40px] items-center justify-center border-r border-[#9a1c1c]">扩展∧</span>
        <span className="flex w-[56px] items-center justify-center border-r border-[#9a1c1c]">关联报价</span>
        <span className="flex w-[45px] items-center justify-center border-r border-[#9a1c1c] text-[#e8e060]">财富圈</span>
        <span className="flex w-[55px] items-center justify-center border-r border-[#9a1c1c] text-[#f04030]">增值功能</span>
        <span className="w-[1034px]" />
        <span className="flex w-[90px] items-center justify-center border-x border-[#9a1c1c]">普及版功能说明</span>
        <span className="flex w-[49px] items-center justify-center border-r border-[#9a1c1c] text-[#e8e060]">图文F10</span>
        <span className="flex w-[51px] items-center justify-center border-r border-[#9a1c1c] pr-[4px]">侧边栏 »</span>
      </div>
    </div>
  )
}
